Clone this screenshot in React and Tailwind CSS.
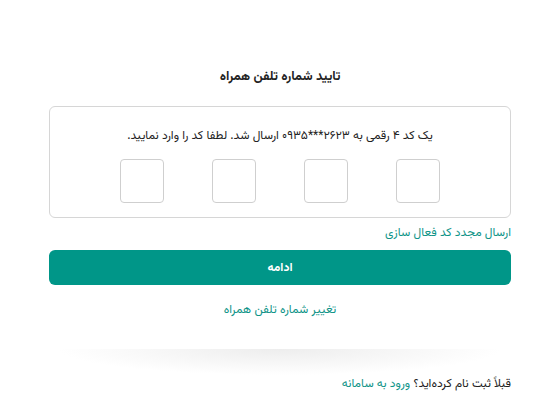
export default function App() {
  const boxes = [0, 1, 2, 3];
  return (
    <div
      dir="rtl"
      className="min-h-[420px] bg-white pl-[49px] pr-[40px] text-[#222]"
      style={{ fontFamily: '"Vazirmatn", "Noto Sans Arabic", "DejaVu Sans", sans-serif' }}
    >
      <div className="w-[462px]">
        <div className="pt-[67px] text-center text-[13px] font-bold leading-[20px]">
          تایید شماره تلفن همراه
        </div>

        <div className="mt-[19px] rounded-[6px] border border-[#d6d6d6] px-4 pb-[14px] pt-[20px]">
          <p className="text-center text-[12px] leading-[18px]">
            یک کد ۴ رقمی به <bdi dir="ltr">۰۹۳۵***۲۶۲۳</bdi> ارسال شد. لطفا کد را وارد نمایید.
          </p>
          <div dir="ltr" className="mt-[14px] flex justify-center gap-[48px]">
            {boxes.map((b) => (
              <div
                key={b}
                className="h-[44px] w-[44px] rounded-[4px] border border-[#cfcfcf] bg-white"
              />
            ))}
          </div>
        </div>

        <div className="mt-[6px] text-[12px] leading-[18px] text-[#0f9488]">
          ارسال مجدد کد فعال سازی
        </div>

        <button className="mt-[8px] h-[35px] w-full rounded-[6px] bg-[#009688] text-[12px] font-bold text-white">
          ادامه
        </button>

        <div className="mt-[16px] text-center text-[12px] leading-[18px] text-[#0f9488]">
          تغییر شماره تلفن همراه
        </div>

        <div className="mx-[10px] mt-[30px] h-[26px] bg-[radial-gradient(ellipse_50%_100%_at_top,#ededed,rgba(255,255,255,0)_100%)]" />

        <div className="mt-[0px] text-[12px] leading-[18px]">
          قبلاً ثبت نام کرده‌اید؟{" "}
          <span className="text-[#0f9488]">ورود به سامانه</span>
        </div>
      </div>
    </div>
  );
}
